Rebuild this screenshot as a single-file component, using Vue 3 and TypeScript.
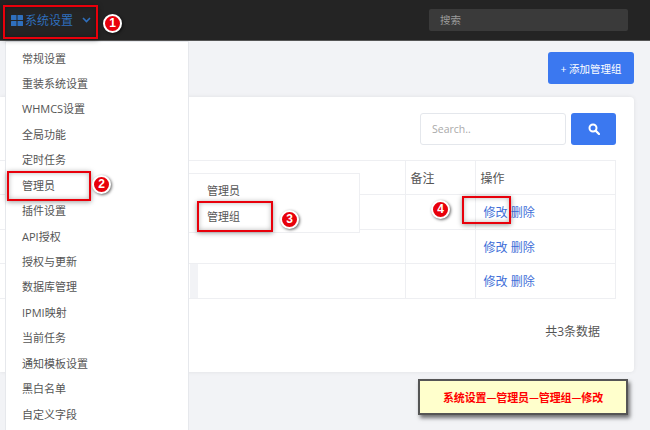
<script setup lang="ts">
const menuItems: string[] = ['常规设置', '重装系统设置', 'WHMCS设置', '全局功能', '定时任务', '管理员', '插件设置', 'API授权', '授权与更新', '数据库管理', 'IPMI映射', '当前任务', '通知模板设置', '黑白名单', '自定义字段']
const rows: number[] = [1, 2, 3]
</script>

<template>
  <div class="page">
    <header class="topbar">
      <div class="nav">
        <svg class="grid-icon" width="12" height="11" viewBox="0 0 12 11"><rect width="5.5" height="5" rx=".5" /><rect x="6.5" width="5.5" height="5" rx=".5" /><rect y="6" width="5.5" height="5" rx=".5" /><rect x="6.5" y="6" width="5.5" height="5" rx=".5" /></svg>
        <span class="nav-label">系统设置</span>
        <svg class="chevron" width="9" height="6" viewBox="0 0 9 6"><path d="M1 1l3.5 3.5L8 1" fill="none" stroke="currentColor" stroke-width="1.6" /></svg>
      </div>
      <div class="top-search">搜索</div>
    </header>

    <main class="main">
      <div class="toolbar"><button class="add-btn">+ 添加管理组</button></div>
      <section class="card">
        <div class="search-row">
          <div class="search-input">Search..</div>
          <button class="search-btn" aria-label="search">
            <svg width="12" height="12" viewBox="0 0 12 12"><circle cx="5" cy="5" r="3.5" fill="none" stroke="#fff" stroke-width="2" /><path d="M7.6 7.6L11 11" stroke="#fff" stroke-width="2.2" stroke-linecap="round" /></svg>
          </button>
        </div>
        <table class="table">
          <colgroup><col class="c1" /><col class="c2" /><col class="c3" /><col class="c4" /><col class="c5" /></colgroup>
          <thead>
            <tr class="head-row"><th colspan="3"></th><th class="ruled">备注</th><th class="ruled end">操作</th></tr>
          </thead>
          <tbody>
            <tr v-for="row in rows" :key="row" :class="row === 2 ? 'row-short' : 'row-tall'">
              <td></td>
              <td :class="{ shade: row === 3 }"></td>
              <td></td>
              <td class="ruled"></td>
              <td class="ruled end actions"><a>修改</a> <a>删除</a></td>
            </tr>
          </tbody>
        </table>
        <div class="total">共3条数据</div>
      </section>
      <div class="callout">系统设置—管理员—管理组—修改</div>
    </main>

    <nav class="dropdown">
      <div v-for="item in menuItems" :key="item" class="menu-item">{{ item }}</div>
    </nav>
    <div class="submenu">
      <div class="sub-item">管理员</div>
      <div class="sub-item">管理组</div>
    </div>

    <div class="mark m1"></div>
    <div class="mark m2"></div>
    <div class="mark m3"></div>
    <div class="mark m4"></div>
    <span class="badge b1">1</span>
    <span class="badge b2">2</span>
    <span class="badge b3">3</span>
    <span class="badge b4">4</span>
  </div>
</template>

<style scoped>
.page {
  position: relative;
  width: 650px;
  height: 430px;
  overflow: hidden;
  display: flex;
  flex-direction: column;
  background: #f2f3f6;
  color: #555;
  font-family: "Open Sans", "Noto Sans CJK SC", sans-serif;
  font-size: 12px;
}
.topbar {
  flex: none;
  height: 40px;
  box-sizing: content-box;
  border-bottom: 1px solid #555;
  background: #242424;
  display: flex;
  align-items: center;
  justify-content: space-between;
  padding-right: 22px;
}
.nav {
  display: flex;
  align-items: center;
  padding-left: 11px;
  color: #2f6fbd;
}
.grid-icon { fill: #2f6fbd; }
.nav-label { margin-left: 2px; font-size: 12px; }
.chevron { margin-left: 9px; color: #2f6fbd; }
.top-search {
  box-sizing: border-box;
  width: 199px;
  height: 22px;
  padding-left: 11px;
  border-radius: 2px;
  background: #3a3a3a;
  color: #9a9a9a;
  font-size: 10.5px;
  line-height: 22px;
}
.main {
  flex: 1;
  display: flex;
  flex-direction: column;
  padding: 11px 16px 0 0;
}
.toolbar { display: flex; justify-content: flex-end; }
.add-btn {
  width: 86px;
  height: 32px;
  padding: 0;
  border: 0;
  border-radius: 3px;
  background: #3b78f0;
  color: #fff;
  font-family: inherit;
  font-size: 10.5px;
}
.card {
  margin-top: 13px;
  height: 275px;
  box-sizing: border-box;
  padding: 16px 18px 0 0;
  background: #fff;
  border-radius: 0 4px 4px 0;
  box-shadow: 0 0 4px rgba(0, 0, 0, .08);
}
.search-row { display: flex; justify-content: flex-end; gap: 5px; }
.search-input {
  box-sizing: border-box;
  width: 146px;
  height: 32px;
  padding-left: 11px;
  border: 1px solid #e4e7ec;
  border-radius: 3px;
  color: #aaa;
  font-size: 10.5px;
  line-height: 30px;
}
.search-btn {
  width: 45px;
  height: 32px;
  padding: 0;
  border: 0;
  border-radius: 3px;
  background: #3b78f0;
  display: flex;
  align-items: center;
  justify-content: center;
}
.table {
  width: 615px;
  margin-top: 15px;
  border-collapse: collapse;
  table-layout: fixed;
}
.c1 { width: 190px; }
.c2 { width: 8px; }
.c3 { width: 207px; }
.c4 { width: 70px; }
.c5 { width: 140px; }
th, td {
  padding: 0;
  border-top: 1px solid #eeeff2;
  border-bottom: 1px solid #eeeff2;
  font-weight: 400;
  text-align: left;
  box-sizing: border-box;
}
.head-row { height: 34px; }
.row-tall { height: 35px; }
.row-short { height: 34px; }
.ruled { border-left: 1px solid #eeeff2; }
th.ruled { padding-left: 5px; }
.end { border-right: 1px solid #eeeff2; }
.shade { background: #f2f3f6; }
.actions { padding-left: 8px; }
.actions a { color: #3f6fd8; }
.total {
  margin-top: 25px;
  padding-right: 16px;
  text-align: right;
  line-height: 16px;
}
.callout {
  align-self: flex-end;
  box-sizing: border-box;
  width: 210px;
  height: 36px;
  margin: 7px 6px 0 0;
  border: 2px solid #555;
  background: #ffc;
  box-shadow: 2px 3px 4px rgba(0, 0, 0, .55);
  color: #f00;
  font-family: "Noto Sans CJK SC", sans-serif;
  font-size: 11px;
  letter-spacing: -.12px;
  font-weight: 700;
  line-height: 32px;
  text-align: center;
}
.dropdown {
  position: absolute;
  left: 5px;
  top: 41px;
  width: 184px;
  height: 395px;
  box-sizing: border-box;
  padding-top: 3.5px;
  background: #fff;
  border: 1px solid #e6e8ec;
}
.menu-item {
  height: 25.45px;
  padding-left: 16px;
  color: #555;
  font-size: 11px;
  line-height: 25.45px;
}
.submenu {
  position: absolute;
  left: 189px;
  top: 173px;
  width: 171px;
  height: 60px;
  box-sizing: border-box;
  padding-top: 4px;
  background: #fff;
  border: 1px solid #eeeff2;
  border-left: 0;
}
.sub-item {
  height: 26px;
  padding-left: 18px;
  color: #555;
  font-size: 11px;
  line-height: 26px;
}
.mark {
  position: absolute;
  box-sizing: border-box;
  border: 2px solid #e8000b;
  box-shadow: 0 1px 5px rgba(0, 0, 0, .4), inset 0 0 5px rgba(0, 0, 0, .28);
}
.m1 { left: 3px; top: 5px; width: 95px; height: 34px; }
.m2 { left: 7px; top: 171px; width: 84px; height: 30px; }
.m3 { left: 197px; top: 201px; width: 76px; height: 31px; }
.m4 { left: 462px; top: 196px; width: 49px; height: 28px; }
.badge {
  position: absolute;
  box-sizing: border-box;
  width: 19px;
  height: 19px;
  border: 2px solid #fff;
  border-radius: 50%;
  background: #e8000b;
  box-shadow: 1px 1px 3px rgba(0, 0, 0, .6);
  color: #fff;
  font-family: "Liberation Sans", sans-serif;
  font-size: 12px;
  font-weight: 700;
  line-height: 15px;
  text-align: center;
}
.b1 { left: 103px; top: 14px; }
.b2 { left: 92px; top: 175px; }
.b3 { left: 280px; top: 210px; }
.b4 { left: 431px; top: 200px; }
</style>

<style>
html, body { margin: 0; background: #f2f3f6; }
</style>
